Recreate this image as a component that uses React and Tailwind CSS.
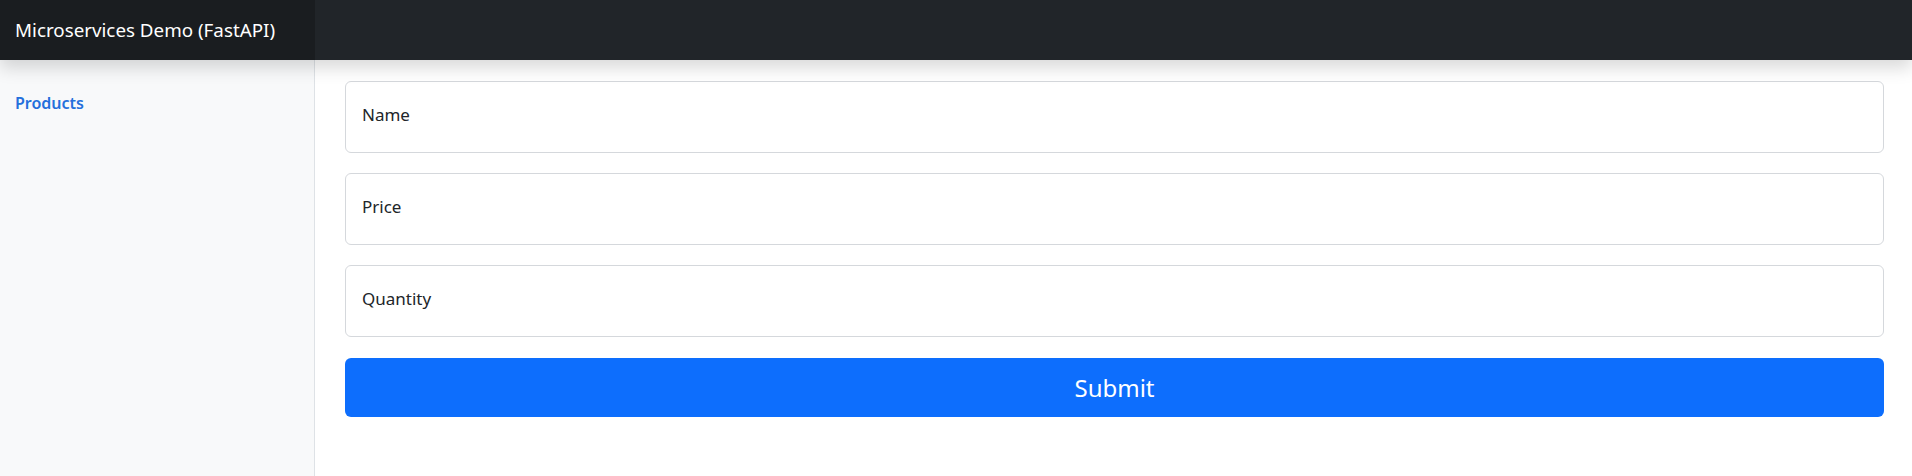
import { useState } from 'react'

function Field({ label, value, onChange }) {
  return (
    <input
      type="text"
      value={value}
      onChange={(e) => onChange(e.target.value)}
      placeholder={label}
      className="block w-full h-[72px] px-4 pb-[6px] text-[17px] text-[#212529] placeholder:text-[#212529] bg-white border border-[#d5d8dc] rounded-md outline-none"
    />
  )
}

export default function App() {
  const [form, setForm] = useState({ name: '', price: '', quantity: '' })

  const set = (key) => (val) => setForm({ ...form, [key]: val })

  return (
    <div className="h-screen flex flex-col bg-white font-['Segoe_UI','Noto_Sans',sans-serif] overflow-hidden">
      {/* Top navbar */}
      <header className="relative z-10 h-[60px] flex-shrink-0 flex bg-[#212529] shadow-[0_8px_16px_rgba(0,0,0,0.15)]">
        <div className="w-[315px] flex items-center px-[15px] bg-[#1a1d20] text-white text-[18.8px]">
          Microservices Demo (FastAPI)
        </div>
      </header>

      <div className="flex flex-1 min-h-0">
        {/* Sidebar */}
        <nav className="w-[315px] flex-shrink-0 bg-[#f8f9fa] border-r border-[#dee2e6] pt-[31px] px-[15px]">
          <a href="#" className="block text-[16px] leading-6 font-semibold text-[#2470dc]">
            Products
          </a>
        </nav>

        {/* Main */}
        <main className="flex-1 pl-[30px] pr-[28px] pt-[21px]">
          <form onSubmit={(e) => e.preventDefault()} className="flex flex-col gap-[20px]">
            <Field label="Name" value={form.name} onChange={set('name')} />
            <Field label="Price" value={form.price} onChange={set('price')} />
            <Field label="Quantity" value={form.quantity} onChange={set('quantity')} />
            <button
              type="submit"
              className="mt-px h-[59px] w-full rounded-md bg-[#0d6efd] text-white text-[24px]"
            >
              Submit
            </button>
          </form>
        </main>
      </div>
    </div>
  )
}
